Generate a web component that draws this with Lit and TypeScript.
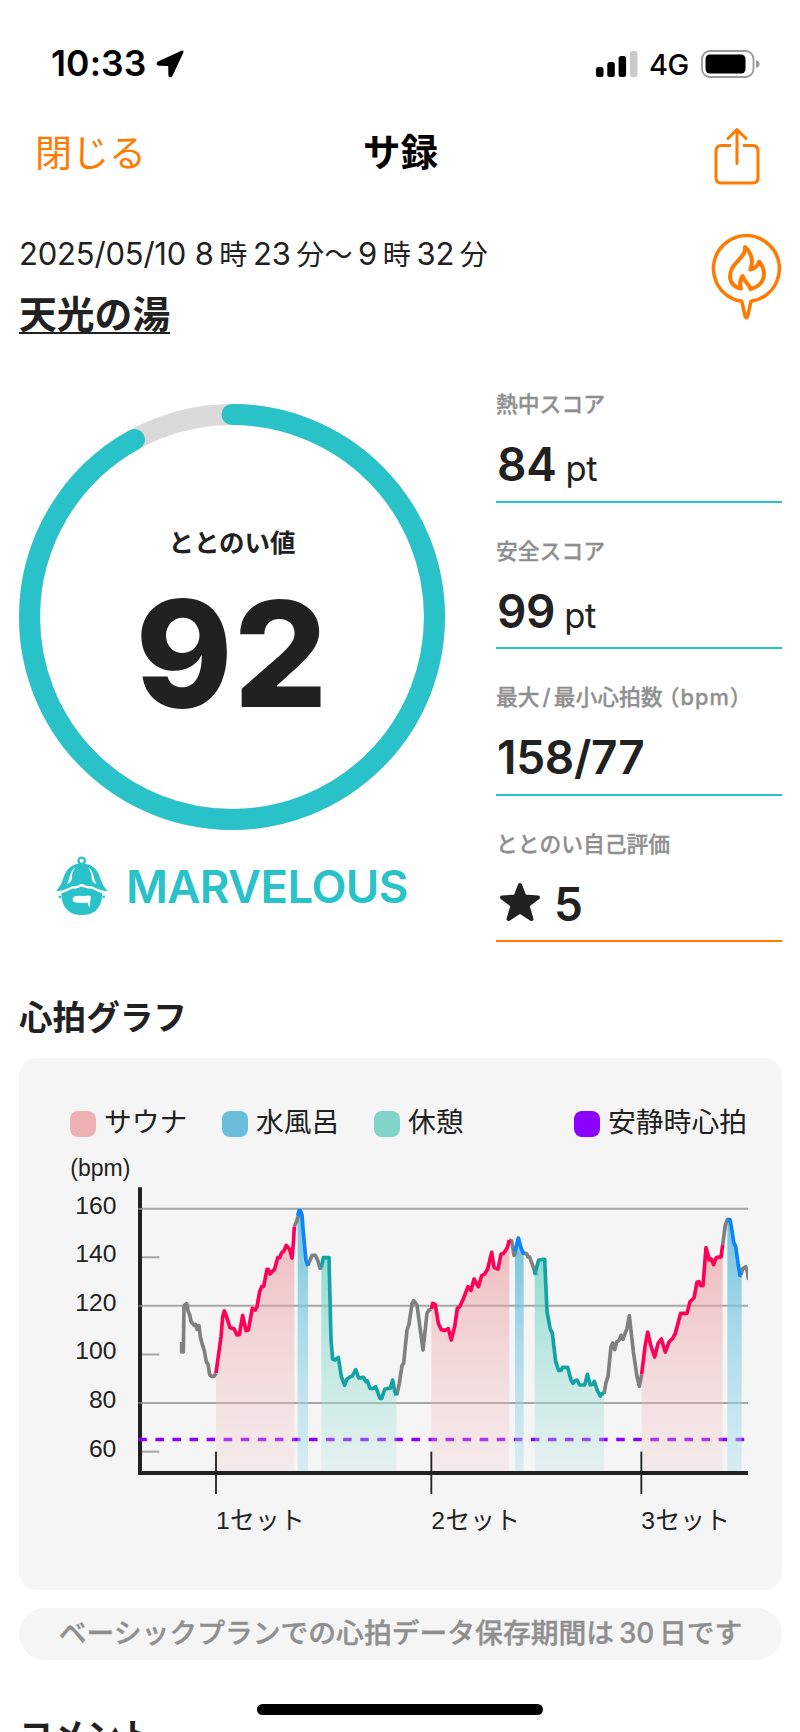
import { LitElement, html, svg, css } from "lit";
import { customElement } from "lit/decorators.js";

type Kind = "rest" | "sauna" | "water" | "move";
interface Segment { kind: Kind; points: number[][]; }

const FLOOR = 873;
const SEGMENTS: Segment[] = [
  { kind: "move", points: [[185,486],[185,516],[190,516],[192,378],[200,371],[204,392],[210,408],[213,424],[222,436],[227,433],[231,448],[237,437],[241,470],[248,497],[253,512],[259,546],[264,552],[269,584],[274,589],[282,589],[288,579]] },
  { kind: "move", points: [[523,140],[530,123],[536,105]] },
  { kind: "move", points: [[564,255],[576,226],[586,226],[594,243],[600,265],[606,262]] },
  { kind: "move", points: [[830,646],[838,610],[846,557],[851,549],[861,450],[867,432],[876,372],[881,362],[891,375],[909,510],[921,400],[926,391],[934,388]] },
  { kind: "move", points: [[1167,180],[1175,183],[1182,226],[1188,215]] },
  { kind: "move", points: [[1210,218],[1220,221],[1224,231],[1229,231],[1248,285]] },
  { kind: "move", points: [[1452,642],[1458,608],[1464,590],[1473,500],[1478,489],[1484,509],[1490,486],[1498,480],[1503,466],[1509,478],[1516,458],[1521,446],[1528,407],[1540,515],[1551,590],[1558,619],[1565,583]] },
  { kind: "move", points: [[1808,195],[1816,135],[1822,119],[1827,119]] },
  { kind: "move", points: [[1862,285],[1868,266],[1877,260],[1882,275],[1886,300]] },
  { kind: "sauna", points: [[288,579],[303,470],[308,410],[313,393],[318,405],[330,443],[342,446],[351,465],[358,464],[368,406],[378,452],[385,450],[397,385],[406,390],[411,380],[419,335],[425,320],[431,319],[441,268],[445,268],[450,282],[464,267],[473,233],[479,233],[485,218],[491,214],[499,196],[509,208],[516,234],[520,190],[523,140]] },
  { kind: "sauna", points: [[934,387],[938,370],[946,374],[955,430],[964,449],[975,451],[985,446],[994,480],[1004,440],[1012,385],[1020,379],[1030,356],[1044,320],[1053,331],[1062,297],[1075,320],[1085,287],[1094,282],[1103,267],[1115,217],[1122,262],[1134,267],[1143,223],[1151,220],[1162,203],[1168,180]] },
  { kind: "sauna", points: [[1565,583],[1575,500],[1583,456],[1592,495],[1604,531],[1614,491],[1624,477],[1636,516],[1647,486],[1658,475],[1666,460],[1682,400],[1701,400],[1710,365],[1722,354],[1731,307],[1737,305],[1742,317],[1749,317],[1758,203],[1768,240],[1774,237],[1781,254],[1788,234],[1796,231],[1803,231],[1808,195]] },
  { kind: "water", points: [[533,107],[537,92],[541,92],[546,105],[549,145],[553,190],[558,242],[564,258]] },
  { kind: "water", points: [[1185,215],[1195,174],[1203,203],[1211,224]] },
  { kind: "water", points: [[1822,119],[1830,119],[1836,152],[1841,187],[1847,199],[1854,250],[1860,286],[1865,287]] },
  { kind: "rest", points: [[604,262],[610,233],[627,233],[633,480],[638,537],[645,540],[655,532],[664,590],[674,616],[681,597],[690,591],[697,588],[707,569],[716,594],[730,592],[738,605],[742,603],[750,625],[758,626],[767,620],[780,655],[785,655],[794,628],[804,625],[811,625],[818,600],[824,633],[829,646]] },
  { kind: "rest", points: [[1244,284],[1256,240],[1274,238],[1281,395],[1291,448],[1297,459],[1307,545],[1316,571],[1323,571],[1328,562],[1343,562],[1353,600],[1359,610],[1365,602],[1371,600],[1379,615],[1394,615],[1402,583],[1411,615],[1419,613],[1423,604],[1432,632],[1441,648],[1446,641],[1452,641]] },
];

const INK: Record<Kind, string> = { move: "#808080", sauna: "#ff0058", water: "#0a85ff", rest: "#13a3a7" };

@customElement("heart-chart")
export class HeartChart extends LitElement {
  static styles = css`
    :host { display: block; }
    svg { display: block; width: 678px; height: 400px; }
    text { font-family: "Liberation Sans", "Noto Sans CJK JP", sans-serif; fill: #212121; font-size: 74px; }
    .unit { font-size: 69px; }
    .set { letter-spacing: 1px; }
    .tick { text-anchor: end; }
  `;

  private line(points: number[][]) {
    return points.map((p, i) => `${i ? "L" : "M"}${p[0]} ${p[1]}`).join("");
  }

  private area(points: number[][]) {
    return `${this.line(points)}V${FLOOR}H${points[0][0]}Z`;
  }

  render() {
    const ticks = [160, 140, 120, 100, 80, 60];
    const sets = [[288, 1], [934, 2], [1564, 3]];
    return html`
      <svg viewBox="-150 -90 2034 1200">
        <defs>
          <linearGradient id="sauna" x1="0" y1="0" x2="0" y2="1">
            <stop offset="0" stop-color="#e98c90" stop-opacity=".55"></stop>
            <stop offset="1" stop-color="#f3c9cb" stop-opacity=".25"></stop>
          </linearGradient>
          <linearGradient id="water" x1="0" y1="0" x2="0" y2="1">
            <stop offset="0" stop-color="#57b9d6" stop-opacity=".82"></stop>
            <stop offset="1" stop-color="#a9dff0" stop-opacity=".4"></stop>
          </linearGradient>
          <linearGradient id="rest" x1="0" y1="0" x2="0" y2="1">
            <stop offset="0" stop-color="#67d3c3" stop-opacity=".72"></stop>
            <stop offset="1" stop-color="#b5e4dd" stop-opacity=".26"></stop>
          </linearGradient>
          <clipPath id="frame"><path d="M0 0H1884V1000H0Z"></path></clipPath>
        </defs>
        <text class="unit" x="-149" y="-12">(bpm)</text>
        ${ticks.map((t, i) => {
          const y = 86 + i * 145.8;
          return svg`
            <text class="tick" x="-11" y=${y + 15}>${t}</text>
            <path d=${`M55 ${y}H${i % 2 ? 118 : 1884}`} stroke="#a6a6a6" stroke-width="6"></path>`;
        })}
        <path d="M60 22V879H1884" fill="none" stroke="#212121" stroke-width="12"></path>
        <path d="M55 86.5H66M55 378H66M55 669H66" stroke="#808080" stroke-width="5"></path>
        <path d="M55 778.5H1884" stroke="#8c00ff" stroke-width="10" stroke-dasharray="25.6 25.6"></path>
        ${SEGMENTS.filter((s) => s.kind !== "move").map((s) => svg`<path d=${this.area(s.points)} fill=${`url(#${s.kind})`}></path>`)}
        <g clip-path="url(#frame)" fill="none" stroke-width="11" stroke-linejoin="round">
          ${SEGMENTS.map((s) => svg`<path d=${this.line(s.points)} stroke=${INK[s.kind]}></path>`)}
        </g>
        ${sets.map(([x, n]) => svg`
          <path d=${`M${x} 815V942`} stroke="#212121" stroke-width="5.500"></path>
          <text class="set" x=${x} y="1048">${n}セット</text>`)}
      </svg>`;
  }
}

@customElement("score-metric")
export class ScoreMetric extends LitElement {
  static styles = css`
    :host { display: flex; flex-direction: column; height: 146.5px; box-sizing: border-box; padding-top: 32px; border-bottom: 2px solid var(--rule, #2ac2c9); }
    .label { font-size: 21.8px; line-height: 32px; font-weight: 500; color: #8f8f8f; white-space: nowrap; -webkit-text-stroke: 0.3px #8f8f8f; }
    .value { display: flex; align-items: baseline; gap: 9px; margin: 17px 0 0 1px; font-size: 46px; line-height: 54px; font-weight: 600; letter-spacing: -0.3px; color: #212121; }
  `;
  render() {
    return html`<div class="label"><slot name="label"></slot></div><div class="value"><slot></slot></div>`;
  }
}

@customElement("app-root")
export class AppRoot extends LitElement {
  static styles = css`
    :host { display: block; width: 800px; height: 1732px; overflow: hidden; background: #fff; color: #212121; font-family: Inter, "Noto Sans CJK JP", sans-serif; white-space: nowrap; }
    svg { display: block; flex: none; }
    .status { display: flex; align-items: center; height: 127px; padding: 0 40px 0 51px; box-sizing: border-box; color: #000; }
    .time { margin-top: 0; font-size: 35.5px; font-weight: 600; letter-spacing: 0.1px; }
    .arrow { margin-left: 10px; }
    .signal { margin-left: auto; }
    .net { margin: 1px 12px 0 11px; font-size: 29px; font-weight: 500; letter-spacing: -0.3px; }
    .nav { display: grid; grid-template: 52px / 1fr auto 1fr; align-items: center; height: 52px; padding: 0 34px 0 35px; color: #ff7a00; }
    .close { margin-top: 2px; font-size: 37px; line-height: 52px; }
    .title { font-size: 37.5px; line-height: 52px; font-weight: 700; color: #000; }
    .share { justify-self: end; margin: 6px 6px 0 0; }
    .visit { display: flex; justify-content: space-between; padding: 55px 18px 0 19px; height: 177px; box-sizing: border-box; }
    .date { font-size: 28px; line-height: 40px; }
    .num { font-size: 31px; letter-spacing: -0.2px; }
    .gap { margin: 0 5.7px; }
    .lead { margin-left: 5.7px; }
    .place { display: inline-block; margin-top: 17px; font-size: 37.8px; line-height: 45px; font-weight: 600; border-bottom: 2px solid #212121; height: 40px; }
    .main { display: flex; justify-content: space-between; padding: 0 18px 0 19px; }
    .left { width: 426px; padding-top: 48px; }
    .ring { display: grid; width: 426px; height: 426px; }
    .ring > * { grid-area: 1 / 1; }
    .score { display: flex; flex-direction: column; align-items: center; padding-top: 121px; }
    .caption { font-size: 25.5px; line-height: 36px; font-weight: 600; }
    .big { font-size: 147px; line-height: 180px; font-weight: 800; letter-spacing: 1px; margin: 3px 0 0 0; }
    .rank { display: flex; align-items: center; gap: 17px; margin: 26px 0 0 36px; height: 60px; color: #2ac2c9; font-size: 45.5px; font-weight: 600; letter-spacing: -0.6px; }
    .metrics { width: 286px; }
    .pt { font-size: 34.5px; font-weight: 400; }
    .slash { margin: 0 3px; }
    .unit { margin-left: -5px; letter-spacing: 1px; }
    .own { --rule: #ff7a00; }
    .star { align-self: center; margin: -4px 4px 0 2px; }
    .heading { font-size: 33.6px; line-height: 50px; font-weight: 600; margin: 51px 0 0 19px; }
    .card { margin: 15px 18px 0 19px; height: 532px; box-sizing: border-box; padding: 46px 34px 0 51px; border-radius: 18px; background: #f5f5f5; }
    .legend { display: flex; align-items: center; height: 40px; font-size: 27.8px; line-height: 36px; }
    .item { display: flex; align-items: center; gap: 8px; width: 152px; }
    .item span { margin-top: -4px; }
    .item.last { width: auto; margin-left: 48px; }
    .swatch { width: 26px; height: 26px; border-radius: 8px; }
    .sauna { background: #efb2b4; } .water { background: #69bcda; } .rest { background: #82d4ca; } .calm { background: #8c00ff; }
    .chart { margin-top: 6px; }
    .notice { margin: 18px 18px 0 19px; height: 52px; border-radius: 26px; background: #f5f5f5; color: #8f8f8f; font-size: 27.8px; line-height: 51px; font-weight: 500; text-align: center; -webkit-text-stroke: 0.35px #8f8f8f; }
    .thirty { margin: 0 5px; letter-spacing: -0.3px; }
    .home { position: absolute; left: 257px; top: 1704px; width: 286px; height: 11px; border-radius: 6px; background: #000; }
  `;

  render() {
    return html`
      <div class="status">
        <span class="time">10:33</span>
        <svg class="arrow" width="28" height="28" viewBox="0 0 28 28"><path d="M25.500.8 2.500 11.300C-.3 12.700.2 15.600 3 15.700L12.200 15.900 12.400 25C12.500 27.800 15.300 28.200 16.500 25.700L27.200 3C27.900 1.300 27 .1 25.500.8Z"></path></svg>
        <svg class="signal" width="43" height="26" viewBox="0 0 43 26"><rect x="1" y="16" width="7.500" height="10" rx="2.500"></rect><rect x="12.300" y="11" width="7.500" height="15" rx="2.500"></rect><rect x="23.600" y="5" width="7.500" height="21" rx="2.500"></rect><rect x="35" width="7.500" height="26" rx="2.500" fill="#cacaca"></rect></svg>
        <span class="net">4G</span>
        <svg width="59" height="28" viewBox="0 0 59 28"><rect x="1" y="1" width="51.500" height="26" rx="8" fill="none" stroke="#999" stroke-width="1.800"></rect><rect x="4.500" y="4.500" width="40" height="19" rx="4.500"></rect><path d="M55 10q3.500 1 3.500 4t-3.500 4Z" fill="#999"></path></svg>
      </div>
      <div class="nav">
        <span class="close">閉じる</span>
        <span class="title">サ録</span>
        <svg class="share" width="46" height="58" viewBox="0 0 46 58" fill="none" stroke="#ff7a00" stroke-width="3" stroke-linecap="round" stroke-linejoin="round"><path stroke-linecap="butt" d="M17 18.500H7.500Q2 18.500 2 24V50.500Q2 56 7.500 56H38.500Q44 56 44 50.500V24Q44 18.500 38.500 18.500H29"></path><path d="M23 36.500V3M14 11.500 23 2.500 32 11.500"></path></svg>
      </div>
      <div class="visit">
        <div>
          <div class="date"><span class="num">2025/05/10 8</span><span class="gap">時</span><span class="num">23</span><span class="lead">分</span>〜<span class="num gap">9</span>時<span class="num gap">32</span>分</div>
          <div class="place">天光の湯</div>
        </div>
        <svg width="71" height="86" viewBox="0 0 71 86" fill="none" stroke="#ff7a00" stroke-width="3.500" stroke-linejoin="round"><path d="M30.800 67.300A33 33 0 1 1 40 67.300L36.600 82.500Q35.400 84.500 34.200 82.500Z"></path><path stroke-width="4" d="M34 13C35.500 24 19 28.500 19 42.500C19 48.500 23.500 53.500 30 54.500C28.500 50 29 45.500 31.500 42C32.500 47 38 49.500 39.500 55C48 53 53 47 53 39.500C53 35 50 30 48.200 27.500C47 31.500 44 34.500 39.300 35.500C43 27 40 18 34 13Z"></path></svg>
      </div>
      <div class="main">
        <div class="left">
          <div class="ring">
            <svg width="426" height="426" viewBox="0 0 426 426" fill="none"><circle cx="213" cy="213" r="202.500" stroke="#dadada" stroke-width="21"></circle><circle cx="213" cy="213" r="202.500" stroke="#2ac2c9" stroke-width="21" stroke-linecap="round" pathLength="100" stroke-dasharray="92 8" transform="rotate(-90 213 213)"></circle></svg>
            <div class="score"><div class="caption">ととのい値</div><div class="big">92</div></div>
          </div>
          <div class="rank">
            <svg width="54" height="60" viewBox="0 0 54 60"><circle cx="26.700" cy="4.800" r="3.200" fill="none" stroke="#2ac2c9" stroke-width="2.300"></circle><path d="M6.500 32V41Q9 59 26.800 59T47.200 41V32L38 29H16Z" fill="#2ac2c9"></path><path d="M26.700 7.500C17 7.500 11 13.500 8.500 21.500C6.500 28 4 31.500 1 35.500C8 34.500 13 32 18 29.500C22 31 24 28 26.700 28S32 31 36 29.500C41 32 46 34.500 53 35.500C49.500 31.500 47 28 45 21.500C42.500 13.500 37 7.500 26.700 7.500Z" fill="#2ac2c9"></path><path d="M1 37.300C8 36.300 13 33.500 18 31.200C22 32.500 24 29.500 26.700 29.500S32 32.500 36 31.200C41 33.500 46 36.300 53 37.300" fill="none" stroke="#fff" stroke-width="2.400"></path><path d="M3.500 40.500l2.500.8M50 40.500l-2.500.8" stroke="#2ac2c9" stroke-width="2"></path><path d="M20.500 11.500C14.500 14.500 15.500 22 12 28Q16 27 16.800 23Q16.800 16 20.500 11.500ZM33 11.500C39 14.500 38 22 41.500 28Q37.500 27 36.700 23Q36.700 16 33 11.500Z" fill="#fff"></path><path d="M21 40Q26 39.200 29 40.300Q34 38.500 36 40.500Q34.800 45 35 51.500Q33 50 32.500 46.500Q28 47.500 23 46.800Q17.500 46.500 17.500 43Q18 40.300 21 40Z" fill="#fff"></path></svg>
            <span>MARVELOUS</span>
          </div>
        </div>
        <div class="metrics">
          <score-metric><span slot="label">熱中スコア</span><span>84</span><span class="pt">pt</span></score-metric>
          <score-metric><span slot="label">安全スコア</span><span>99</span><span class="pt">pt</span></score-metric>
          <score-metric><span slot="label">最大<span class="slash">/</span>最小心拍数<span class="unit">（bpm）</span></span><span>158/77</span></score-metric>
          <score-metric class="own"><span slot="label">ととのい自己評価</span><svg class="star" width="42" height="40" viewBox="0 0 42 40"><path d="M21 3 25.500 14.500 39 15.500 28.500 23.500 32.500 37 21 29.500 9.500 37 13.500 23.500 3 15.500 16.500 14.500Z" fill="#212121" stroke="#212121" stroke-width="4" stroke-linejoin="round"></path></svg><span>5</span></score-metric>
        </div>
      </div>
      <div class="heading">心拍グラフ</div>
      <div class="card">
        <div class="legend">
          <div class="item"><i class="swatch sauna"></i><span>サウナ</span></div>
          <div class="item"><i class="swatch water"></i><span>水風呂</span></div>
          <div class="item"><i class="swatch rest"></i><span>休憩</span></div>
          <div class="item last"><i class="swatch calm"></i><span>安静時心拍</span></div>
        </div>
        <heart-chart class="chart"></heart-chart>
      </div>
      <div class="notice">ベーシックプランでの心拍データ保存期間は<span class="thirty">30</span>日です</div>
      <div class="heading">コメント</div>
      <div class="home"></div>
    `;
  }
}
